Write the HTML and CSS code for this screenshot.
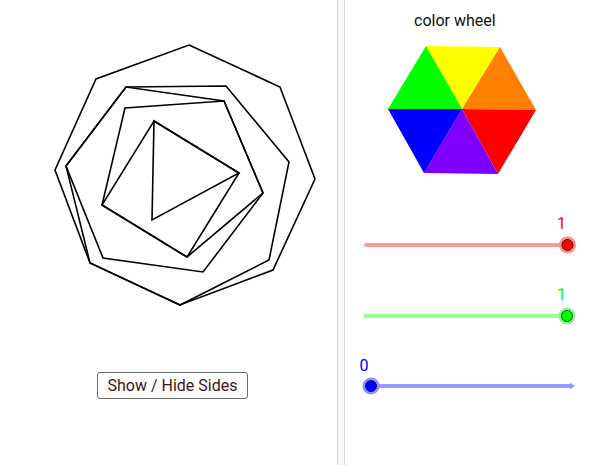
FILE: index.html
```html
<!DOCTYPE html>
<html>
<head>
<meta charset="utf-8">
<link rel="stylesheet" href="styles.css">
</head>
<body>
<div class="app">
  <div class="view view-left">
    <svg class="canvas" width="337" height="340" viewBox="0 0 337 340">
      <g fill="none" stroke="#000" stroke-width="1.6">
        <polygon points="189,45 280,87 315,179 273,270 180,305 90,263 55,170 96,79"/>
        <polygon points="126,87 226,86 289,162 269,260 180,305 90,263 66,166"/>
        <polygon points="66,166 126,87 224,101 263,193 203,272 103,258"/>
        <polygon points="224,101 263,193 187,257 102,205 125,108"/>
        <polygon points="154,121 239,173 187,257 102,205"/>
        <polygon points="154,121 239,173 152,220"/>
      </g>
    </svg>
    <button class="toggle">Show / Hide Sides</button>
  </div>
  <div class="divider"></div>
  <div class="view view-right">
    <div class="title">color wheel</div>
    <svg class="wheel" width="258" height="160" viewBox="0 0 258 160">
      <g transform="translate(-345,-30)">
        <polygon points="426,46 500,47 462,109" fill="#ffff00"/>
        <polygon points="500,47 536,110 462,109" fill="#ff8000"/>
        <polygon points="536,110 498,174 462,109" fill="#ff0000"/>
        <polygon points="498,174 424,173 462,109" fill="#8000ff"/>
        <polygon points="424,173 388,109 462,109" fill="#0000ff"/>
        <polygon points="388,109 426,46 462,109" fill="#00ff00"/>
      </g>
    </svg>
    <svg class="sliders" width="258" height="260" viewBox="0 0 258 260">
      <g transform="translate(-345,-205)">
        <line x1="366" y1="245" x2="567" y2="245" stroke="#ff9999" stroke-width="4" stroke-linecap="round"/>
        <circle cx="567.5" cy="245" r="8.5" fill="#ff8c8c"/>
        <circle cx="567.5" cy="245" r="5.5" fill="#ff0000" stroke="#000" stroke-width="1" stroke-dasharray="1.5 0.6"/>
        <text x="557" y="229" class="lbl" fill="#ff0000">1</text>

        <line x1="365" y1="316" x2="567" y2="316" stroke="#99ff99" stroke-width="4" stroke-linecap="round"/>
        <circle cx="567" cy="316" r="8.5" fill="#8cf58c"/>
        <circle cx="567" cy="316" r="5.5" fill="#00ff00" stroke="#000" stroke-width="1" stroke-dasharray="1.5 0.6"/>
        <text x="557" y="300" class="lbl" fill="#00ff00">1</text>

        <line x1="371" y1="386" x2="571" y2="386" stroke="#9999ff" stroke-width="4"/>
        <polygon points="570,382.5 575,386 570,389.5" fill="#9999ff"/>
        <circle cx="371" cy="386" r="8.5" fill="#8c8cff"/>
        <circle cx="371" cy="386" r="5.5" fill="#0000ff" stroke="#000" stroke-width="1" stroke-dasharray="1.5 0.6"/>
        <text x="359.5" y="371" class="lbl" fill="#0000ff">0</text>
      </g>
    </svg>
  </div>
</div>
</body>
</html>
```
FILE: styles.css
```css
html, body {
  margin: 0;
  padding: 0;
  background: #fff;
}
body {
  font-family: Roboto, "Liberation Sans", sans-serif;
}
.app {
  display: flex;
  width: 603px;
  height: 465px;
  overflow: hidden;
}
.view {
  display: flex;
  flex-direction: column;
}
.view-left {
  width: 337px;
  flex: none;
}
.canvas {
  display: block;
}
.toggle {
  align-self: flex-start;
  margin: 32px 0 0 97px;
  width: 151px;
  height: 27px;
  box-sizing: border-box;
  padding: 0;
  background: #fff;
  border: 1.3px solid #6b6b6b;
  border-radius: 3px;
  font-family: Roboto, "Liberation Sans", sans-serif;
  font-size: 16px;
  color: #3d1515;
  line-height: 24px;
}
.divider {
  width: 6px;
  flex: none;
  background: #f7f7f7;
  border-left: 1px solid #d6d6d6;
  border-right: 1px solid #d6d6d6;
}
.view-right {
  flex: 1;
}
.title {
  padding: 11px 0 0 69px;
  height: 19px;
  line-height: 19px;
  font-size: 16px;
  color: #111;
}
.wheel, .sliders {
  display: block;
}
.sliders {
  margin-top: 15px;
}
.lbl {
  font-family: Roboto, "Liberation Sans", sans-serif;
  font-size: 16px;
}
```
